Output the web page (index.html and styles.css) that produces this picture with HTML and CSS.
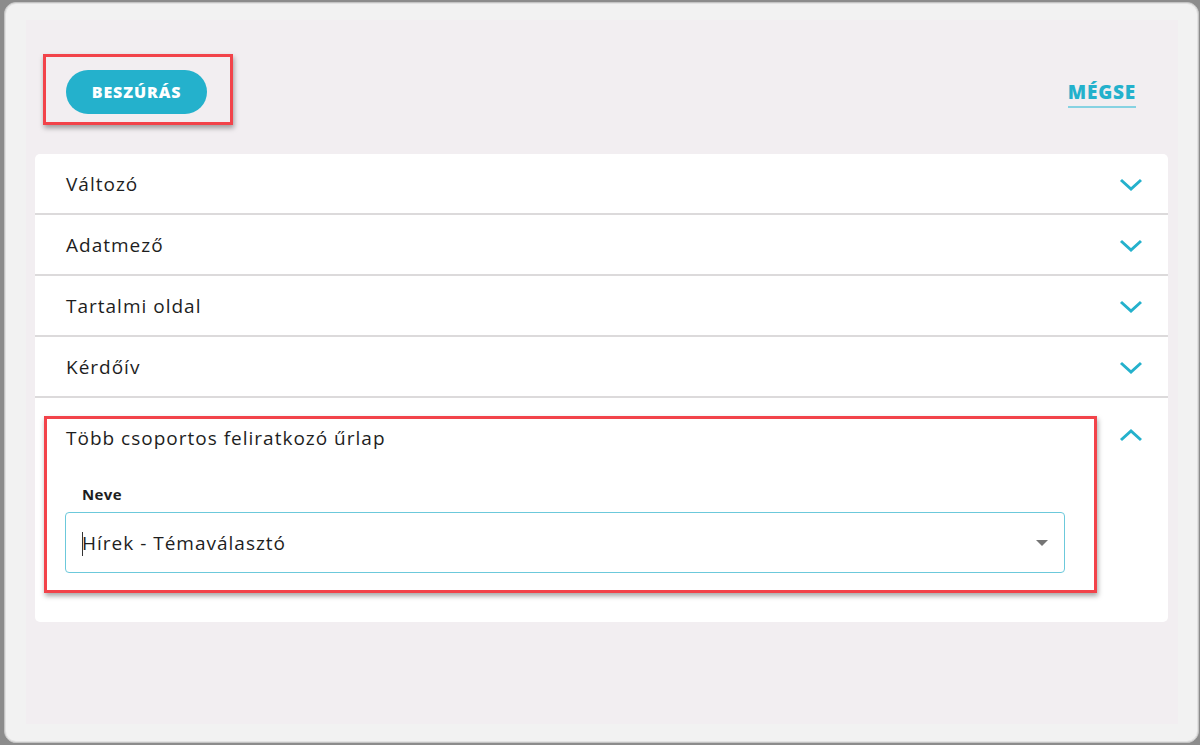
FILE: index.html
```html
<!DOCTYPE html>
<html lang="hu">
<head>
    <meta charset="UTF-8">
    <meta name="viewport" content="width=device-width, initial-scale=1.0">
    <title>Beszúrás</title>
    <link rel="stylesheet" href="styles.css">
</head>
<body>

<div class="dialog">
    <div class="panel">

        <div class="toolbar">
            <div class="highlight highlight-button">
                <button class="btn-primary" type="button">BESZÚRÁS</button>
            </div>
            <a href="#" class="btn-link">MÉGSE</a>
        </div>

        <div class="accordion">
            <div class="acc-row">
                <span class="acc-title">Változó</span>
                <svg class="chevron" viewBox="0 0 24 14"><path d="M2 2 L12 11 L22 2"/></svg>
            </div>
            <div class="acc-row">
                <span class="acc-title">Adatmező</span>
                <svg class="chevron" viewBox="0 0 24 14"><path d="M2 2 L12 11 L22 2"/></svg>
            </div>
            <div class="acc-row">
                <span class="acc-title">Tartalmi oldal</span>
                <svg class="chevron" viewBox="0 0 24 14"><path d="M2 2 L12 11 L22 2"/></svg>
            </div>
            <div class="acc-row">
                <span class="acc-title">Kérdőív</span>
                <svg class="chevron" viewBox="0 0 24 14"><path d="M2 2 L12 11 L22 2"/></svg>
            </div>

            <!-- expanded section -->
            <div class="acc-open">
                <div class="highlight highlight-section">
                    <div class="acc-title">Több csoportos feliratkozó űrlap</div>
                    <label class="field-label">Neve</label>
                    <div class="select">
                        <span class="select-value"><span class="caret"></span>Hírek - Témaválasztó</span>
                        <span class="select-arrow"></span>
                    </div>
                </div>
                <svg class="chevron chevron-up" viewBox="0 0 24 14"><path d="M2 12 L12 3 L22 12"/></svg>
            </div>
        </div>

    </div>
</div>

</body>
</html>
```

FILE: styles.css
```css
html, body {
    margin: 0;
    padding: 0;
    height: 745px;
    overflow: hidden;
}
body {
    background-color: #8c8c8c;
    font-family: "Open Sans", Arial, sans-serif;
    color: #1e1e1e;
}
.dialog {
    box-sizing: border-box;
    height: 741px;
    margin: 2px 1px 0 4px;
    padding: 17px 20px 18px 21px;
    background-color: #f2f2f2;
    border: 1px solid #c4c4c4;
    border-radius: 12px;
    box-shadow: inset 0 0 0 1px #e2e2e2;
}
.panel {
    box-sizing: border-box;
    height: 100%;
    padding: 0 10px 0 9px;
    background-color: #f2eef1;
}
.toolbar {
    display: flex;
    justify-content: space-between;
    align-items: center;
    padding: 34px 32px 0 8px;
}
.highlight {
    border: 3px solid #f2434a;
    box-shadow: 1px 3px 5px rgba(0, 0, 0, 0.35);
}
.highlight-button {
    padding: 13px 23px 8px 20px;
}
.btn-primary {
    display: block;
    width: 141px;
    height: 44px;
    padding: 0;
    border: none;
    border-radius: 22px;
    background-color: #24b1cc;
    color: white;
    font-family: "Open Sans", Arial, sans-serif;
    font-weight: 800;
    font-size: 16px;
    letter-spacing: 0.9px;
    cursor: pointer;
}
.btn-link {
    margin-top: 10px;
    padding-bottom: 4px;
    border-bottom: 2px solid #86d2e2;
    color: #24b1cc;
    font-weight: 800;
    font-size: 19px;
    letter-spacing: 0.8px;
    text-decoration: none;
    line-height: 20px;
}
.accordion {
    margin-top: 29px;
    background-color: white;
    border-radius: 5px;
}
.acc-row {
    display: flex;
    align-items: center;
    justify-content: space-between;
    height: 59px;
    padding: 0 25px 0 31px;
    border-bottom: 2px solid #dcdadb;
}
.acc-title {
    font-size: 19px;
    letter-spacing: 1px;
    color: #1e1e1e;
}
.chevron {
    width: 24px;
    height: 14px;
    margin-top: 2px;
    fill: none;
    stroke: #24b1cc;
    stroke-width: 3;
}
.acc-open {
    display: flex;
    align-items: flex-start;
    padding: 18px 25px 29px 9px;
}
.highlight-section {
    flex: 1;
    padding: 6px 29px 17px 18px;
}
.highlight-section .acc-title {
    display: block;
    margin-left: 1px;
    line-height: 26px;
}
.chevron-up {
    margin: 12px 0 0 22px;
}
.field-label {
    display: block;
    margin: 33px 0 8px 17px;
    font-size: 15px;
    font-weight: 700;
    letter-spacing: 0.4px;
    color: #1e1e1e;
}
.select {
    display: flex;
    align-items: center;
    justify-content: space-between;
    box-sizing: border-box;
    height: 61px;
    padding: 0 16px 0 16px;
    border: 1px solid #6cc9db;
    border-radius: 4px;
}
.select-value {
    position: relative;
    font-size: 19px;
    letter-spacing: 1px;
    color: #1e1e1e;
}
.caret {
    position: absolute;
    left: 0;
    top: 2px;
    width: 1px;
    height: 24px;
    background-color: #333;
}
.select-arrow {
    width: 0;
    height: 0;
    border-left: 6px solid transparent;
    border-right: 6px solid transparent;
    border-top: 6px solid #757575;
}
```
